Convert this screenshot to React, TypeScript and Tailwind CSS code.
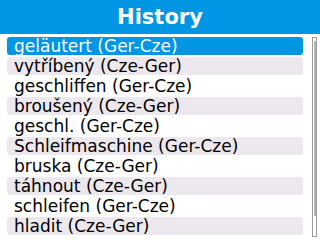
import React from "react";

const items = [
  "geläutert (Ger-Cze)",
  "vytříbený (Cze-Ger)",
  "geschliffen (Ger-Cze)",
  "broušený (Cze-Ger)",
  "geschl. (Ger-Cze)",
  "Schleifmaschine (Ger-Cze)",
  "bruska (Cze-Ger)",
  "táhnout (Cze-Ger)",
  "schleifen (Ger-Cze)",
  "hladit (Cze-Ger)",
];

export default function App() {
  return (
    <div
      className="w-[320px] h-[240px] bg-white overflow-hidden"
      style={{ fontFamily: '"DejaVu Sans", sans-serif' }}
    >
      <div className="h-[34px] bg-[#0096e4] flex items-center justify-center">
        <span className="text-white font-bold text-[21px] leading-none">History</span>
      </div>
      <div className="flex mt-[3px]">
        <div className="ml-[7px] w-[296px] flex flex-col">
          {items.map((t, i) => (
            <div
              key={t}
              className={
                i === 0
                  ? "h-[18px] mb-[2px] rounded-[3px] pl-[7px] bg-[#0096e4] text-white text-[17px] leading-[18px] whitespace-nowrap"
                  : i % 2 === 1
                  ? "h-[18px] mb-[2px] rounded-[3px] pl-[7px] bg-[#ede8ed] text-black text-[17px] leading-[18px] whitespace-nowrap"
                  : "h-[18px] mb-[2px] rounded-[3px] pl-[7px] text-black text-[17px] leading-[18px] whitespace-nowrap"
              }
            >
              {t}
            </div>
          ))}
        </div>
        <div className="ml-[9px] w-[5px] h-[200px] border border-[#9a9a9a] bg-white pt-[3px] flex justify-center">
          <div className="w-[2px] h-[175px] bg-[#b4b4b4]" />
        </div>
      </div>
    </div>
  );
}
